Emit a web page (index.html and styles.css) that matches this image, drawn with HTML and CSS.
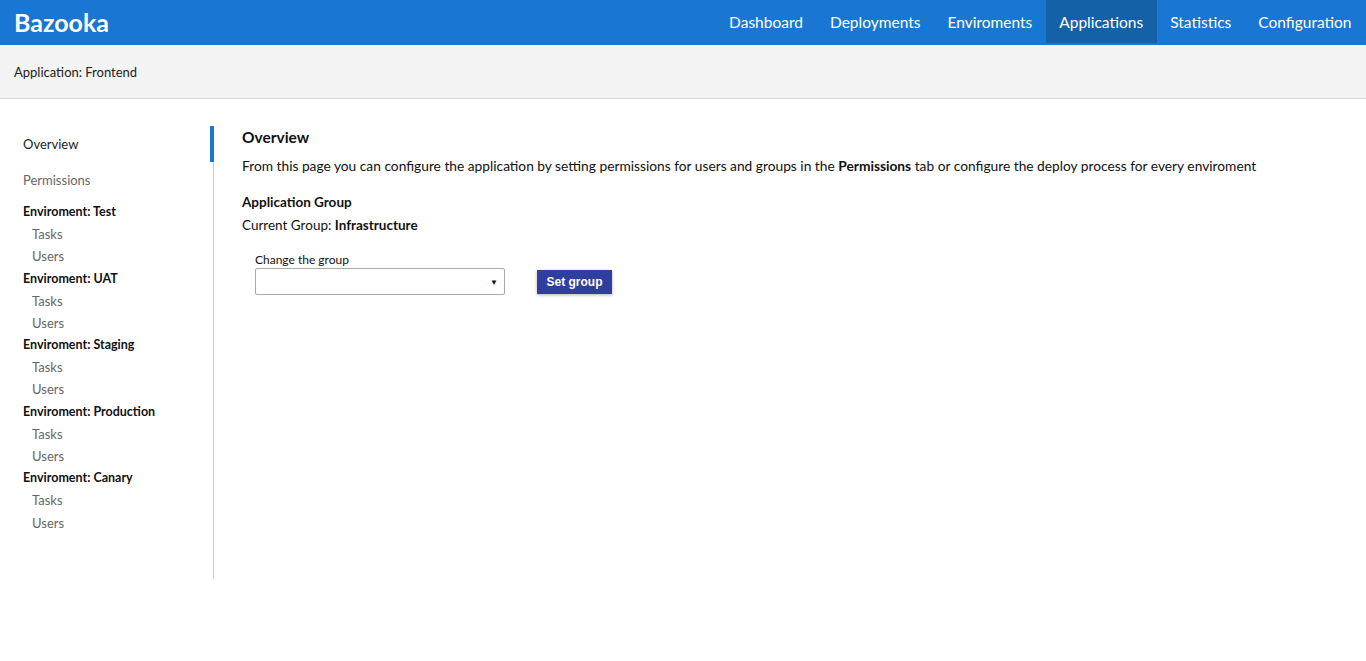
FILE: index.html
```html
<!DOCTYPE html>
<html>
<head>
<meta charset="utf-8">
<link rel="stylesheet" href="styles.css">
</head>
<body>
<header class="topbar">
  <div class="brand">Bazooka</div>
  <nav class="nav">
    <a class="nav-item">Dashboard</a>
    <a class="nav-item">Deployments</a>
    <a class="nav-item">Enviroments</a>
    <a class="nav-item active">Applications</a>
    <a class="nav-item">Statistics</a>
    <a class="nav-item">Configuration</a>
  </nav>
</header>
<div class="subbar">Application: Frontend</div>
<div class="main">
  <aside class="sidebar">
    <a class="side-link active">Overview</a>
    <a class="side-link muted">Permissions</a>
    <div class="env">Enviroment: Test</div>
    <a class="sub">Tasks</a>
    <a class="sub">Users</a>
    <div class="env">Enviroment: UAT</div>
    <a class="sub">Tasks</a>
    <a class="sub">Users</a>
    <div class="env">Enviroment: Staging</div>
    <a class="sub">Tasks</a>
    <a class="sub">Users</a>
    <div class="env">Enviroment: Production</div>
    <a class="sub">Tasks</a>
    <a class="sub">Users</a>
    <div class="env">Enviroment: Canary</div>
    <a class="sub">Tasks</a>
    <a class="sub">Users</a>
  </aside>
  <section class="content">
    <h2 class="title">Overview</h2>
    <p class="intro">From this page you can configure the application by setting permissions for users and groups in the <b>Permissions</b> tab or configure the deploy process for every enviroment</p>
    <h3 class="group-title">Application Group</h3>
    <p class="current">Current Group: <b>Infrastructure</b></p>
    <div class="form-row">
      <div class="field">
        <label class="field-label">Change the group</label>
        <div class="select"><span class="caret">&#9660;</span></div>
      </div>
      <button class="btn">Set group</button>
    </div>
  </section>
</div>
</body>
</html>
```
FILE: styles.css
```css
* { box-sizing: border-box; }
body {
  margin: 0;
  font-family: Lato, "Open Sans", sans-serif;
  color: #111;
  background: #fff;
}
.topbar {
  height: 45px;
  background: #1976d2;
  display: flex;
  align-items: stretch;
  justify-content: space-between;
  padding-left: 14px;
}
.brand {
  color: #fff;
  font-size: 25px;
  font-weight: 700;
  line-height: 45px;
}
.nav { display: flex; padding-right: 1px; }
.nav-item {
  color: #fff;
  font-size: 15.5px;
  line-height: 45px;
  padding: 0 13.5px;
}
.nav-item.active { background: #1561a8; height: 43px; }
.subbar {
  height: 54px;
  background: #f3f3f3;
  border-bottom: 1px solid #d6d6d6;
  font-size: 13px;
  line-height: 55px;
  padding-left: 14px;
  color: #222;
}
.main { display: flex; padding-top: 27px; }
.sidebar {
  width: 214px;
  border-right: 1px solid #ccc;
  display: flex;
  flex-direction: column;
  padding-bottom: 45px;
  font-size: 13px;
}
.side-link {
  display: block;
  height: 36px;
  line-height: 36px;
  padding-left: 23px;
  color: #222;
  margin-right: -1px;
}
.side-link.active { border-right: 4px solid #1976d2; }
.side-link.muted { color: #666; }
.env {
  font-weight: 700;
  padding-left: 23px;
  height: 22px;
  line-height: 22px;
  font-size: 12.5px;
  color: #111;
}
.side-link.muted + .env { margin-top: 3px; }
.sub {
  display: block;
  padding-left: 32px;
  height: 22.3px;
  line-height: 22px;
  color: #666;
}
.content { padding-left: 28px; padding-top: 0; }
.title {
  margin: 0;
  font-size: 15.5px;
  font-weight: 700;
  line-height: 22px;
}
.intro {
  margin: 9px 0 0;
  font-size: 13.75px;
  line-height: 18px;
}
.group-title {
  margin: 18px 0 0;
  font-size: 13.5px;
  font-weight: 700;
  line-height: 18px;
}
.current {
  margin: 5px 0 0;
  font-size: 13.5px;
  line-height: 18px;
}
.form-row {
  display: flex;
  align-items: flex-end;
  gap: 32px;
  padding-left: 13px;
  margin-top: 18px;
}
.field { display: flex; flex-direction: column; }
.field-label { font-size: 12px; line-height: 16px; color: #111; }
.select {
  width: 250px;
  height: 27px;
  border: 1px solid #aaa;
  border-radius: 2px;
  display: flex;
  justify-content: flex-end;
  align-items: center;
  padding-right: 6px;
}
.caret { font-size: 8px; color: #111; }
.btn {
  height: 24px;
  width: 75px;
  margin-bottom: 1px;
  background: #303f9f;
  color: #fff;
  border: none;
  font-family: "Liberation Sans", Arial, sans-serif;
  font-weight: 700;
  font-size: 12px;
  box-shadow: 0 1px 3px rgba(0,0,0,0.3);
  padding: 0;
}
```
